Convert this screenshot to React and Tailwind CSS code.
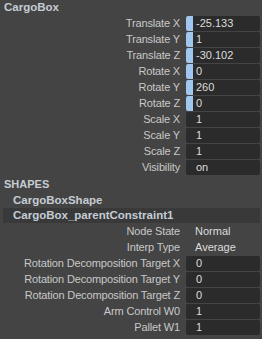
import React from "react";

const font = { fontFamily: '"Liberation Sans", Arial, sans-serif' };

function Row({ label, value, keyed, field = true }) {
  return (
    <div className="flex h-[16px] items-start">
      <div className="w-[181px] shrink-0 pr-[1px] text-right text-[11px] leading-[15px] tracking-[-0.15px] text-[#c8c8c8]">
        {label}
      </div>
      <div className="ml-[5px] flex h-[15px] w-[74px]">
        {field ? (
          <div className="flex h-[15px] w-full overflow-hidden rounded-[2px] bg-[#2b2b2b]">
            {keyed ? (
              <div className="h-full w-[7px] shrink-0 bg-[#9fc7f0]" />
            ) : (
              <div className="h-full w-[7px] shrink-0" />
            )}
            <div className="pl-[3px] text-[11px] leading-[15px] text-[#dcdcdc]">{value}</div>
          </div>
        ) : (
          <div className="pl-[9px] text-[11px] leading-[15px] text-[#dcdcdc]">{value}</div>
        )}
      </div>
    </div>
  );
}

export default function App() {
  return (
    <div className="h-[339px] w-[262px] overflow-hidden bg-[#444444]" style={font}>
      <div className="h-[16px] pl-[4px] text-[11.5px] font-bold leading-[15px] text-[#c4ccd4]">CargoBox</div>
      <Row label="Translate X" value="-25.133" keyed />
      <Row label="Translate Y" value="1" keyed />
      <Row label="Translate Z" value="-30.102" keyed />
      <Row label="Rotate X" value="0" keyed />
      <Row label="Rotate Y" value="260" keyed />
      <Row label="Rotate Z" value="0" keyed />
      <Row label="Scale X" value="1" />
      <Row label="Scale Y" value="1" />
      <Row label="Scale Z" value="1" />
      <Row label="Visibility" value="on" />
      <div className="h-[16px] pl-[4px] text-[11px] font-bold leading-[16px] text-[#c4ccd4]">SHAPES</div>
      <div className="h-[16px] pl-[13px] text-[11.5px] font-bold leading-[16px] text-[#c4ccd4]">CargoBoxShape</div>
      <div className="mb-[1px] ml-[3px] mr-[2px] h-[15px] bg-[#393939] pl-[10px] text-[11.5px] font-bold leading-[15px] text-[#c4ccd4]">
        CargoBox_parentConstraint1
      </div>
      <Row label="Node State" value="Normal" field={false} />
      <Row label="Interp Type" value="Average" field={false} />
      <Row label="Rotation Decomposition Target X" value="0" />
      <Row label="Rotation Decomposition Target Y" value="0" />
      <Row label="Rotation Decomposition Target Z" value="0" />
      <Row label="Arm Control W0" value="1" />
      <Row label="Pallet W1" value="1" />
    </div>
  );
}
